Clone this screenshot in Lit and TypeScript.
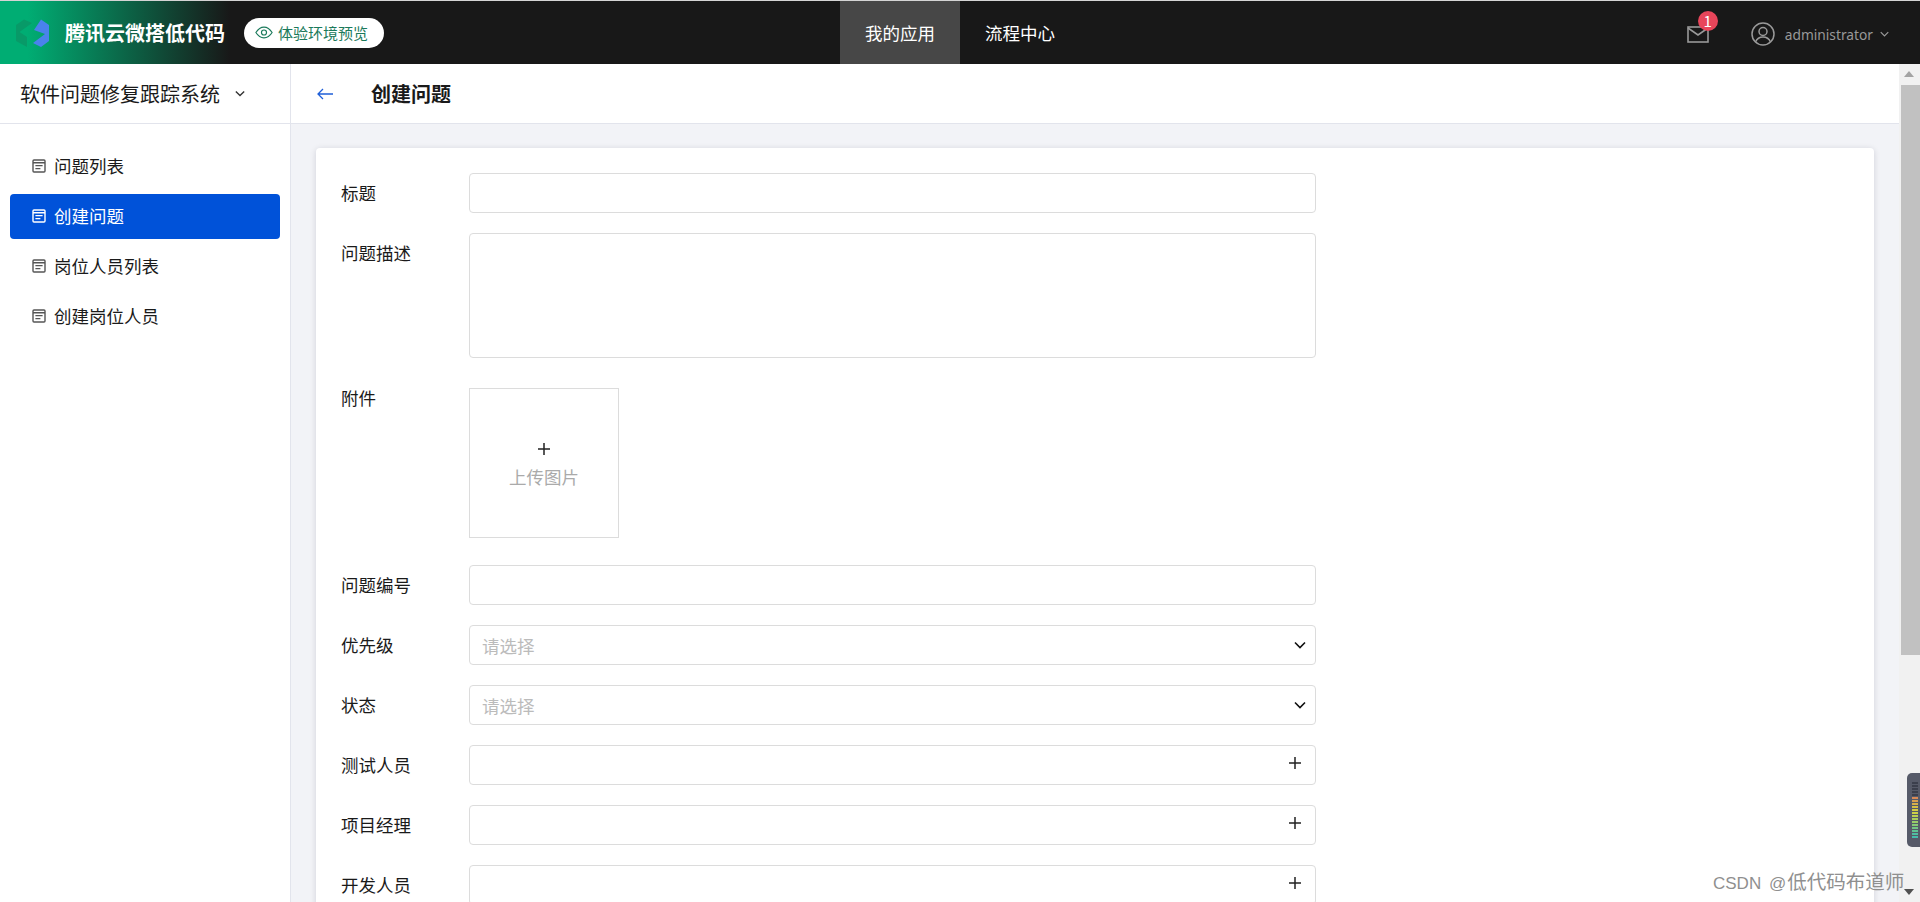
import { LitElement, html, css } from "lit";
import { customElement } from "lit/decorators.js";

const docIcon = html`<svg class="doc" viewBox="0 0 14 14" width="14" height="14" fill="none" stroke="currentColor" stroke-width="1.4"><rect x="1" y="1" width="12" height="12" rx="1"/><path d="M1 3.7h12M3.4 6.6h7.2M3.4 9.6h5"/></svg>`;
const chevron = html`<svg class="chev" viewBox="0 0 12 8" width="12" height="8" fill="none" stroke="currentColor" stroke-width="1.6"><path d="M1 1.5l5 5 5-5"/></svg>`;
const plus = html`<svg class="plus" viewBox="0 0 12 12" width="12" height="12" stroke="currentColor" stroke-width="1.5"><path d="M0 6h12M6 0v12"/></svg>`;

@customElement("app-root")
export class AppRoot extends LitElement {
  static styles = css`
    :host { display: flex; flex-direction: column; height: 902px; overflow: hidden; position: relative; font-family: "Noto Sans CJK SC", "Noto Sans", sans-serif; color: #1a1a1a; background: #f2f3f7; }
    .top { height: 64px; flex: none; box-sizing: border-box; border-top: 1px solid #d4d4d4; background: #181818; display: flex; align-items: center; position: relative; color: #fff; }
    .brand { width: 230px; height: 100%; flex: none; display: flex; align-items: center; gap: 16px; padding-left: 16px; box-sizing: border-box; background: linear-gradient(90deg, #00ad73 0%, #00ad73 12%, #181818 100%); margin-right: 14px; }
    .logo { flex: none; margin-top: 1px; }
    .brand-name { font-size: 20px; font-weight: 700; white-space: nowrap; line-height: 1; }
    .pill { height: 30px; width: 140px; box-sizing: border-box; padding-left: 11px; background: #fff; border-radius: 15px; color: #1b7a5b; font-size: 15px; display: flex; align-items: center; gap: 5px; white-space: nowrap; }
    .nav { position: absolute; left: 840px; top: 0; bottom: 0; display: flex; }
    .nav a { width: 120px; display: flex; align-items: center; justify-content: center; font-size: 17.5px; }
    .nav a.on { background: #474747; }
    .right { margin-left: auto; display: flex; align-items: center; color: #999; padding: 3px 31px 0 0; }
    .mail { position: relative; display: flex; margin-right: 42px; }
    .badge { position: absolute; left: 11px; top: -15px; width: 20px; height: 20px; border-radius: 50%; background: #e8455a; color: #fff; font-size: 15px; line-height: 20px; text-align: center; }
    .user { display: flex; align-items: center; font-size: 13.75px; font-family: "Noto Sans", sans-serif; }
    .user .av { margin-right: 10px; }
    .user .chev { width: 9px; height: 6px; margin-left: 7px; }
    .body { flex: 1; display: flex; min-height: 0; }
    aside { width: 291px; flex: none; box-sizing: border-box; background: #fff; border-right: 1px solid #e2e4ec; }
    .sys { height: 60px; box-sizing: border-box; border-bottom: 1px solid #e2e4ec; display: flex; align-items: center; padding-left: 20px; font-size: 20px; gap: 15px; margin-bottom: 20px; }
    .sys .chev { width: 10px; height: 7px; color: #333; }
    .menu { padding: 0 10px; display: flex; flex-direction: column; gap: 5px; }
    .menu a { height: 45px; box-sizing: border-box; border-radius: 4px; display: flex; align-items: center; padding: 0 0 2px 22px; gap: 8px; font-size: 17.5px; color: #1a1a1a; }
    .menu a .doc { color: #555; }
    .menu a.on { background: #0052d9; color: #fff; }
    .menu a.on .doc { color: #fff; }
    main { flex: 1; min-width: 0; }
    .sub { height: 60px; box-sizing: border-box; background: #fff; border-bottom: 1px solid #e2e4ec; display: flex; align-items: center; padding-left: 26px; }
    .sub h1 { margin: 0 0 0 38px; font-size: 20px; font-weight: 600; }
    .card { margin: 24px 0 0 25px; height: 900px; background: #fff; border-radius: 4px; box-shadow: 0 1px 6px rgba(0,0,40,.14); padding: 25px; box-sizing: border-box; display: flex; flex-direction: column; width: 1558px; }
    .row { display: flex; margin-bottom: 20px; }
    .row label { width: 128px; flex: none; font-size: 17.5px; line-height: 40px; color: #1a1a1a; }
    .box { width: 847px; height: 40px; box-sizing: border-box; border: 1px solid #dcdcdc; border-radius: 4px; display: flex; align-items: center; justify-content: space-between; padding: 0 9px 0 12px; font-size: 17.5px; color: #bbb; }
    .box .chev { color: #111; }
    .box .plus { color: #222; margin-right: 5px; margin-top: -4px; }
    .area { height: 125px; }
    .row.ta { margin-bottom: 30px; }
    .row.up { margin-bottom: 27px; }
    .row.up label { line-height: 20px; }
    .upload { width: 150px; height: 150px; box-sizing: border-box; border: 1px solid #dcdcdc; padding-top: 5px; display: flex; flex-direction: column; align-items: center; justify-content: center; gap: 9px; font-size: 17.5px; color: #aaa; }
    .upload .plus { color: #222; }
    .bar { width: 21px; flex: none; background: #f1f1f1; display: flex; flex-direction: column; }
    .arrow { height: 20px; flex: none; display: flex; align-items: center; justify-content: center; padding-right: 1px; }
    .thumb { width: 19px; height: 570px; margin: 1px 0 auto auto; background: #c1c1c1; }
    .meter { position: absolute; right: 0; top: 773px; width: 13px; height: 74px; background: #565a68; border-radius: 5px 0 0 5px; box-sizing: border-box; padding: 9px 0 0 5px; }
    .meter i { display: block; height: 2px; margin-bottom: 1px; width: 6px; }
    .mark { position: absolute; left: 1713px; bottom: 7px; font-family: "Liberation Sans", "Noto Sans CJK SC", sans-serif; font-size: 17px; word-spacing: 3px; color: #8f8f8f; white-space: nowrap; display: flex; align-items: baseline; gap: 1px; }
    .mark b { font-weight: 400; font-size: 19.5px; }
  `;

  private field(name: string, kind: "input" | "select" | "plus") {
    return html`<div class="row"><label>${name}</label><div class="box">
      ${kind === "select" ? html`<span>请选择</span>${chevron}` : kind === "plus" ? html`<span></span>${plus}` : ""}
    </div></div>`;
  }

  render() {
    const meterColors = ["#3b3f4c","#3b3f4c","#3b3f4c","#3b3f4c","#3b3f4c","#d98a55","#d8a04f","#d8b04a","#d6c045","#d4cc44","#ccd048","#bcd050","#aacf5c","#98cd68","#86ca75","#72c684","#5fc393","#50bfa0","#46bcab"];
    return html`
      <div class="top">
        <div class="brand">
          <svg class="logo" viewBox="0 0 33 28" width="33" height="28">
            <path d="M8 .5L16 4 3.500 13 11 18v10L0 22V6z" fill="#089a68"/>
            <path d="M25 .5L33 6v16l-8 6-8-4 12-9-11-4z" fill="#4a82ec"/>
          </svg>
          <span class="brand-name">腾讯云微搭低代码</span>
        </div>
        <div class="pill">
          <svg viewBox="0 0 20 14" width="18" height="13" fill="none" stroke="#1b7a5b" stroke-width="1.3"><path d="M1 7c2.500-4 5.500-6 9-6s6.500 2 9 6c-2.500 4-5.500 6-9 6s-6.500-2-9-6z"/><circle cx="10" cy="7" r="2.800"/></svg>
          体验环境预览
        </div>
        <nav class="nav"><a class="on">我的应用</a><a>流程中心</a></nav>
        <div class="right">
          <div class="mail">
            <svg viewBox="0 0 22 17" width="22" height="17" fill="none" stroke="currentColor" stroke-width="1.600"><rect x="1" y="1" width="20" height="15"/><path d="M1 2l10 7 10-7"/></svg>
            <span class="badge">1</span>
          </div>
          <div class="user">
            <svg class="av" viewBox="0 0 24 24" width="24" height="24" fill="none" stroke="currentColor" stroke-width="1.500"><circle cx="12" cy="12" r="11"/><circle cx="12" cy="9.500" r="4"/><path d="M4.500 20c1.500-3.500 4-5 7.500-5s6 1.500 7.500 5"/></svg>
            administrator ${chevron}
          </div>
        </div>
      </div>
      <div class="body">
        <aside>
          <div class="sys">软件问题修复跟踪系统 ${chevron}</div>
          <div class="menu">
            <a>${docIcon}问题列表</a>
            <a class="on">${docIcon}创建问题</a>
            <a>${docIcon}岗位人员列表</a>
            <a>${docIcon}创建岗位人员</a>
          </div>
        </aside>
        <main>
          <div class="sub">
            <svg viewBox="0 0 16 12" width="16" height="12" fill="none" stroke="#1f5fd8" stroke-width="1.300"><path d="M16 6H1M6 1L1 6l5 5"/></svg>
            <h1>创建问题</h1>
          </div>
          <div class="card">
            ${this.field("标题", "input")}
            <div class="row ta"><label>问题描述</label><div class="box area"></div></div>
            <div class="row up"><label>附件</label><div class="upload">${plus}上传图片</div></div>
            ${this.field("问题编号", "input")}
            ${this.field("优先级", "select")}
            ${this.field("状态", "select")}
            ${this.field("测试人员", "plus")}
            ${this.field("项目经理", "plus")}
            ${this.field("开发人员", "plus")}
          </div>
        </main>
        <div class="bar">
          <div class="arrow"><svg viewBox="0 0 10 6" width="10" height="6" fill="#a3a3a3"><path d="M5 0l5 6H0z"/></svg></div>
          <div class="thumb"></div>
          <div class="arrow"><svg viewBox="0 0 10 6" width="10" height="6" fill="#505050"><path d="M5 6l5-6H0z"/></svg></div>
        </div>
      </div>
      <div class="meter">${meterColors.map((c) => html`<i style="background:${c}"></i>`)}</div>
      <div class="mark">CSDN @<b>低代码布道师</b></div>
    `;
  }
}
